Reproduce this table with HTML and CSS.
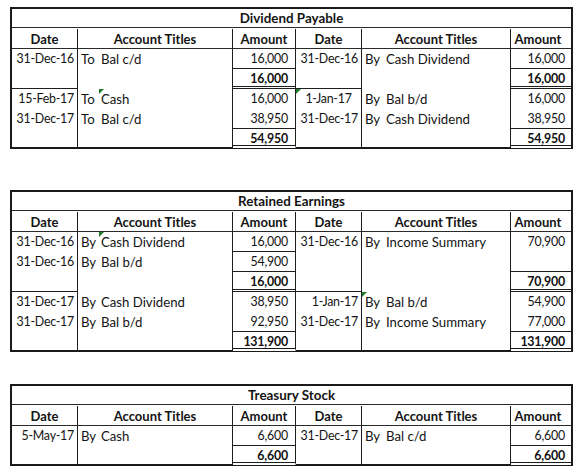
FILE: index.html
```html
<!DOCTYPE html>
<html>
<head>
<meta charset="utf-8">
<link rel="stylesheet" href="styles.css">
</head>
<body>
<div class="ledger l1">
  <div class="c title">Dividend Payable</div>
  <div class="c hd d">Date</div><div class="c hd t span2">Account Titles</div><div class="c hd a">Amount</div><div class="c hd d">Date</div><div class="c hd t span2">Account Titles</div><div class="c hd a r">Amount</div>

  <div class="c d">31-Dec-16</div><div class="c p">To</div><div class="c t">Bal c/d</div><div class="c a b">16,000</div><div class="c d">31-Dec-16</div><div class="c p">By</div><div class="c t">Cash Dividend</div><div class="c a r b">16,000</div>
  <div class="c d b"></div><div class="c p"></div><div class="c t"></div><div class="c a dbl tot">16,000</div><div class="c d b"></div><div class="c p"></div><div class="c t"></div><div class="c a r dbl tot">16,000</div>
  <div class="c d">15-Feb-17</div><div class="c p">To</div><div class="c t flag">Cash</div><div class="c a">16,000</div><div class="c d ctr flag">1-Jan-17</div><div class="c p">By</div><div class="c t">Bal b/d</div><div class="c a r">16,000</div>
  <div class="c d">31-Dec-17</div><div class="c p">To</div><div class="c t">Bal c/d</div><div class="c a b">38,950</div><div class="c d">31-Dec-17</div><div class="c p">By</div><div class="c t">Cash Dividend</div><div class="c a r b">38,950</div>
  <div class="c d last"></div><div class="c p last"></div><div class="c t last"></div><div class="c a last tot">54,950</div><div class="c d last"></div><div class="c p last"></div><div class="c t last"></div><div class="c a r last tot">54,950</div>
</div>

<div class="ledger l2">
  <div class="c title">Retained Earnings</div>
  <div class="c hd d">Date</div><div class="c hd t span2">Account Titles</div><div class="c hd a">Amount</div><div class="c hd d">Date</div><div class="c hd t span2">Account Titles</div><div class="c hd a r">Amount</div>

  <div class="c d">31-Dec-16</div><div class="c p">By</div><div class="c t flag">Cash Dividend</div><div class="c a b">16,000</div><div class="c d">31-Dec-16</div><div class="c p">By</div><div class="c t">Income Summary</div><div class="c a r">70,900</div>
  <div class="c d">31-Dec-16</div><div class="c p">By</div><div class="c t">Bal b/d</div><div class="c a b">54,900</div><div class="c d"></div><div class="c p"></div><div class="c t"></div><div class="c a r b"></div>
  <div class="c d b"></div><div class="c p"></div><div class="c t"></div><div class="c a dbl tot">16,000</div><div class="c d b"></div><div class="c p"></div><div class="c t"></div><div class="c a r dbl tot">70,900</div>
  <div class="c d">31-Dec-17</div><div class="c p">By</div><div class="c t">Cash Dividend</div><div class="c a">38,950</div><div class="c d">1-Jan-17</div><div class="c p flag">By</div><div class="c t">Bal b/d</div><div class="c a r">54,900</div>
  <div class="c d">31-Dec-17</div><div class="c p">By</div><div class="c t">Bal b/d</div><div class="c a b">92,950</div><div class="c d">31-Dec-17</div><div class="c p">By</div><div class="c t">Income Summary</div><div class="c a r b">77,000</div>
  <div class="c d last"></div><div class="c p last"></div><div class="c t last"></div><div class="c a last tot">131,900</div><div class="c d last"></div><div class="c p last"></div><div class="c t last"></div><div class="c a r last tot">131,900</div>
</div>

<div class="ledger l3">
  <div class="c title">Treasury Stock</div>
  <div class="c hd d">Date</div><div class="c hd t span2">Account Titles</div><div class="c hd a">Amount</div><div class="c hd d">Date</div><div class="c hd t span2">Account Titles</div><div class="c hd a r">Amount</div>

  <div class="c d">5-May-17</div><div class="c p">By</div><div class="c t">Cash</div><div class="c a b">6,600</div><div class="c d">31-Dec-17</div><div class="c p">By</div><div class="c t">Bal c/d</div><div class="c a r b">6,600</div>
  <div class="c d last"></div><div class="c p last"></div><div class="c t last"></div><div class="c a last tot">6,600</div><div class="c d last"></div><div class="c p last"></div><div class="c t last"></div><div class="c a r last tot">6,600</div>
</div>
</body>
</html>
```

FILE: styles.css
```css
* { box-sizing: border-box; }

html, body {
  background: #ffffff;
}

body {
  margin: 0;
  padding: 7px 0 0 10px;
  font-family: Lato, "Liberation Sans", sans-serif;
  font-size: 13.2px;
  color: #141414;
}

.ledger {
  width: 563px;
  display: grid;
  grid-template-columns: 66px 21px 134px 63px 66px 22px 127px 60px;
  grid-auto-rows: 20px;
  border: 2px solid #1a1a1a;
  border-bottom: none;
}

.l2 { margin-top: 41px; }
.l3 { margin-top: 32px; }

.c {
  height: 20px;
  padding-top: 2px;
  line-height: 16px;
  white-space: nowrap;
  position: relative;
}

.title {
  grid-column: 1 / -1;
  height: 19px;
  padding-top: 1px;
  text-align: center;
  font-weight: 700;
  font-size: 13.4px;
  border-bottom: 1px solid #2a2a2a;
}

.hd {
  font-weight: 700;
  font-size: 13px;
  text-align: center;
  border-bottom: 1px solid #2a2a2a;
}

.span2 { grid-column: span 2; }

.d {
  font-size: 12.4px;
  letter-spacing: -0.25px;
  text-align: right;
  padding-right: 3px;
  border-right: 1px solid #1e1e1e;
}

.hd.d { text-align: center; padding-right: 0; font-size: 13px; letter-spacing: 0; }

.ctr { text-align: center; padding-right: 0; }

.p { padding-left: 3px; }

.t {
  padding-left: 2px;
  border-right: 1px solid #1e1e1e;
}

.hd.t { padding-left: 0; text-align: center; }

.a {
  font-size: 12.4px;
  letter-spacing: -0.2px;
  text-align: right;
  padding-right: 7px;
  border-right: 1px solid #1e1e1e;
}

.hd.a { text-align: center; padding-right: 0; font-size: 13px; letter-spacing: 0; }

.a.r {
  border-right: none;
  padding-right: 6px;
}

.b { border-bottom: 1px solid #1e1e1e; }

.dbl { border-bottom: 3px double #1e1e1e; }

.tot { font-weight: 700; color: #111111; }

.last { border-bottom: 2px solid #1a1a1a; }

.a.last { border-bottom: 4px double #1a1a1a; }

.flag::before {
  content: "";
  position: absolute;
  left: 0;
  top: 0;
  border-top: 5px solid #1f7a2a;
  border-right: 5px solid transparent;
}
```
